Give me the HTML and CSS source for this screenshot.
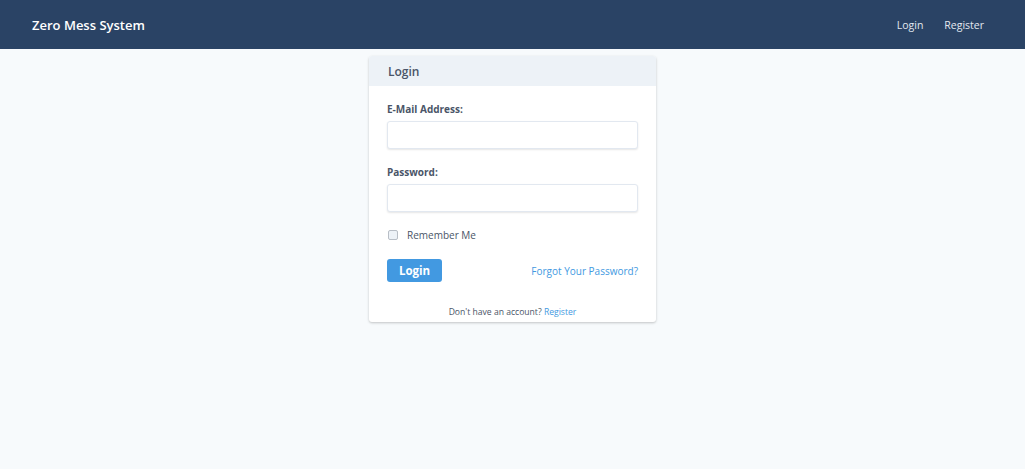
FILE: index.html
```html
<!DOCTYPE html>
<html>
<head>
    <title>Zero Mess System</title>
    <link rel="stylesheet" href="styles.css">
</head>
<body>
    <nav class="site-nav">
        <a href="/" class="brand">Zero Mess System</a>
        <div class="nav-links">
            <a href="/login">Login</a>
            <a href="/register">Register</a>
        </div>
    </nav>

    <main class="content">
        <div class="card">
            <div class="card-header">Login</div>
            <form class="card-body">
                <div class="field">
                    <label for="email">E-Mail Address:</label>
                    <input type="email" id="email" name="email">
                </div>
                <div class="field">
                    <label for="password">Password:</label>
                    <input type="password" id="password" name="password">
                </div>
                <label class="remember">
                    <input type="checkbox" name="remember">
                    <span>Remember Me</span>
                </label>
                <div class="actions">
                    <button type="submit" class="btn">Login</button>
                    <a href="/password/reset" class="link">Forgot Your Password?</a>
                </div>
                <p class="signup">Don't have an account? <a href="/register" class="link">Register</a></p>
            </form>
        </div>
    </main>
</body>
</html>
```

FILE: styles.css
```css
body {
    font-family: 'Open Sans', sans-serif;
    margin: 0;
    padding: 0;
    background-color: #f7fafc;
    color: #4a5568;
    min-height: 100vh;
}

.site-nav {
    background-color: #2a4365;
    height: 49px;
    display: flex;
    align-items: center;
    justify-content: space-between;
    padding: 1px 41px 0 32px;
    box-sizing: border-box;
}

.brand {
    color: #fff;
    font-size: 13px;
    font-weight: 600;
    text-decoration: none;
}

.nav-links {
    display: flex;
    gap: 21px;
}

.nav-links a {
    color: #e2e8f0;
    font-size: 10.5px;
    text-decoration: none;
}

.content {
    display: flex;
    justify-content: center;
    padding-top: 7px;
}

.card {
    width: 287px;
    background-color: #fff;
    border-radius: 3px;
    box-shadow: 0 1px 3px rgba(0, 0, 0, 0.15), 0 1px 2px rgba(0, 0, 0, 0.08);
    overflow: hidden;
}

.card-header {
    background-color: #edf2f7;
    height: 30px;
    line-height: 31px;
    padding: 0 19px;
    font-size: 12px;
    font-weight: 600;
    color: #4a5568;
}

.card-body {
    padding: 15px 18px 0;
    display: flex;
    flex-direction: column;
}

.field {
    margin-bottom: 15px;
}

.field label {
    display: block;
    font-size: 10px;
    font-weight: 700;
    line-height: 16px;
    color: #4a5568;
    margin-bottom: 4px;
}

.field input {
    width: 100%;
    height: 28px;
    box-sizing: border-box;
    border: 1px solid #e2e8f0;
    border-radius: 3px;
    box-shadow: 0 1px 2px rgba(0, 0, 0, 0.1);
    padding: 0 8px;
    outline: none;
}

.remember {
    display: flex;
    align-items: center;
    gap: 9px;
    font-size: 10px;
    color: #4a5568;
    margin-top: 1px;
}

.remember input {
    appearance: none;
    width: 10px;
    height: 10px;
    margin: 0 0 0 1px;
    border: 1px solid #b8bec6;
    border-radius: 2px;
    background-color: #edf2f7;
}

.actions {
    display: flex;
    align-items: center;
    justify-content: space-between;
    margin-top: 17px;
}

.btn {
    background-color: #4299e1;
    color: #fff;
    border: none;
    border-radius: 3px;
    height: 23px;
    padding: 0 12px;
    font-family: inherit;
    font-size: 11.5px;
    font-weight: 700;
}

.link {
    color: #4299e1;
    font-size: 10px;
    text-decoration: none;
}

.signup {
    text-align: center;
    font-size: 8.6px;
    color: #4a5568;
    margin: 24px 0 4px;
}

.signup .link {
    font-size: 8.6px;
}
```
